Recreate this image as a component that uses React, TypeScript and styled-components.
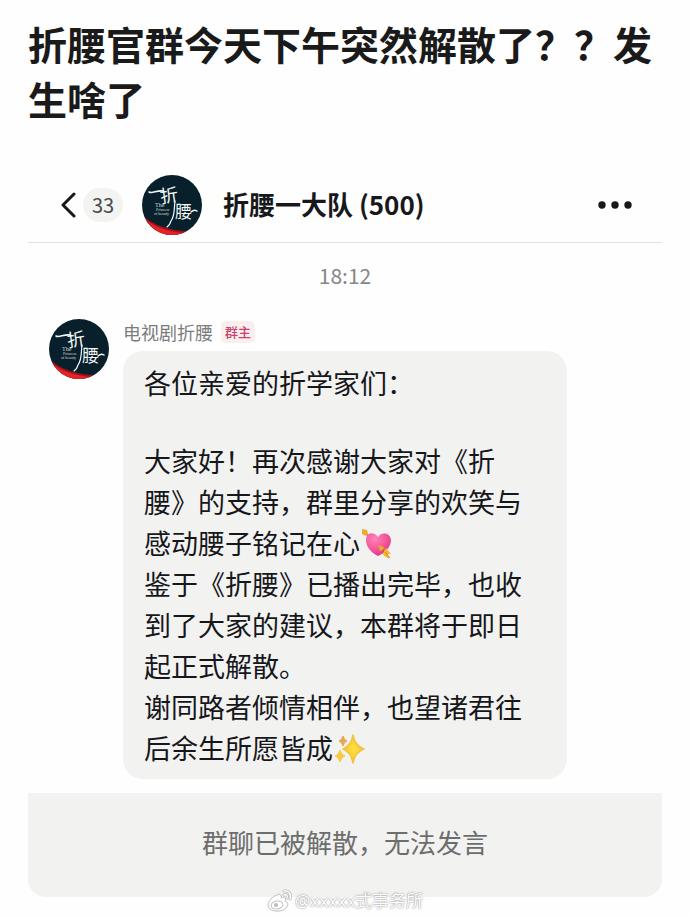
import React from "react";
import styled, { createGlobalStyle } from "styled-components";

const GlobalStyle = createGlobalStyle`
  *, *::before, *::after { box-sizing: border-box; }
  body {
    margin: 0;
    background: #fefefe;
    color: #16171a;
    font-family: "Noto Sans CJK SC", "Noto Sans", sans-serif;
    text-spacing-trim: space-all;
  }
`;

const Page = styled.main`
  position: relative;
  padding: 16px 28px 20px;
`;

const PostTitle = styled.h1`
  margin: 0;
  font-size: 39px;
  line-height: 55px;
  font-weight: 700;
  color: #1a1a1a;
`;

const ChatHeader = styled.header`
  display: flex;
  align-items: center;
  height: 76px;
  margin-top: 41px;
  padding: 0 28px 0 32px;
  border-bottom: 1px solid #e2e2e2;
`;

const IconButton = styled.button`
  display: flex;
  padding: 0;
  border: 0;
  background: none;
  color: #17181c;
  cursor: pointer;
`;

const UnreadBadge = styled.span`
  margin: 0 19px 0 7px;
  width: 40px;
  border-radius: 17px;
  background: #f3f3f2;
  color: #4c4c4e;
  font-size: 20px;
  line-height: 34px;
  text-align: center;
`;

const AvatarArt = styled.svg`
  flex: none;
  width: 60px;
  height: 60px;
`;

const GroupName = styled.h2`
  flex: 1;
  margin: 0 0 0 21px;
  padding-bottom: 2px;
  font-size: 26px;
  line-height: 36px;
  font-weight: 700;
  color: #17181c;
`;

const Timestamp = styled.time`
  display: block;
  margin-top: 17px;
  color: #868686;
  font-size: 21px;
  line-height: 30px;
  text-align: center;
`;

const Message = styled.article`
  display: flex;
  align-items: flex-start;
  gap: 14px;
  margin-top: 29px;
  padding: 0 95px 0 21px;
`;

const MessageBody = styled.div`
  flex: 1;
  min-width: 0;
`;

const Sender = styled.div`
  display: flex;
  align-items: center;
  gap: 8px;
  height: 26px;
  color: #7b7b7d;
  font-size: 18px;
  line-height: 26px;
`;

const OwnerTag = styled.span`
  padding: 0 4px;
  border-radius: 5px;
  background: #fbeeee;
  color: #c9426c;
  font-size: 13px;
  font-weight: 500;
  line-height: 22px;
`;

const Bubble = styled.div`
  margin-top: 6px;
  padding: 11px 21px;
  border-radius: 20px;
  background: #f2f2f1;
  font-size: 27px;
  line-height: 41px;
`;

const Paragraph = styled.p`
  margin: 0;
`;

const Greeting = styled(Paragraph)`
  padding-bottom: 37px;
`;

const Emoji = styled.svg`
  width: 32px;
  height: 32px;
  vertical-align: -6px;
`;

const Notice = styled.footer`
  margin-top: 14px;
  padding: 29px 16px 35px;
  border-radius: 0 0 18px 18px;
  background: #f2f2f1;
  color: #6d6d6d;
  font-size: 26px;
  line-height: 40px;
  text-align: center;
`;

const Watermark = styled.div`
  position: absolute;
  left: 0;
  right: 0;
  bottom: 4px;
  display: flex;
  justify-content: center;
  align-items: center;
  gap: 2px;
  color: #fff;
  font-family: "Noto Sans", "Noto Sans CJK SC", sans-serif;
  font-size: 17px;
  line-height: 24px;
  text-shadow: 0 0 2px #8a8a8a, 0 0 1px #9a9a9a;
  opacity: 0.85;
`;

function Avatar({ id }: { id: string }) {
  return (
    <AvatarArt viewBox="0 0 60 60" role="img" aria-label="折腰">
      <clipPath id={id}>
        <circle cx="30" cy="30" r="30" />
      </clipPath>
      <g clipPath={`url(#${id})`}>
        <rect width="60" height="60" fill="#07202b" />
        <path d="M0 40C11 50 27 56 47 56L42 62H0Z" fill="#a80f19" />
        <path d="M1 43C12 52 26 57 43 58L39 61H5Z" fill="#e22328" />
        <path d="M46 3C50 5 54 10 57 15L59 8L51 1Z" fill="#b51620" />
        <g fill="#f4f7f7" fontFamily="Noto Sans CJK SC, sans-serif" fontWeight="400">
          <text x="18" y="27" fontSize="18" transform="rotate(-8 27 20)">折</text>
          <text x="33" y="43" fontSize="17">腰</text>
        </g>
        <g fill="none" stroke="#f4f7f7" strokeLinecap="round">
          <path d="M7 17C10 19 15 15 21 16" strokeWidth="1.6" />
          <path d="M33 26C32 33 33 41 29 46Q28 50 25 52" strokeWidth="1.2" />
          <path d="M49 37Q52 34 55 36" strokeWidth="1.5" />
        </g>
        <g fill="#d5dddf" fontFamily="Liberation Serif, serif">
          <text x="13" y="32" fontSize="6">The</text>
          <text x="14" y="36" fontSize="4">Princess</text>
          <text x="12" y="40" fontSize="4">of beauty</text>
        </g>
      </g>
    </AvatarArt>
  );
}

function HeartArrow() {
  return (
    <Emoji viewBox="0 0 32 32" role="img" aria-label="💘">
      <defs>
        <radialGradient id="heart" cx="0.35" cy="0.25" r="0.8">
          <stop offset="0" stopColor="#ff83b5" />
          <stop offset="0.6" stopColor="#f2559a" />
          <stop offset="1" stopColor="#dc3782" />
        </radialGradient>
      </defs>
      <path d="M4 4L11 10" stroke="#c98a32" strokeWidth="2" />
      <path d="M2 1L7 2L8 6L6 8L2 6Z" fill="#eeaa35" />
      <path d="M18 28C10 24 6 18 6 12C6 4 14 3 18 9C22 3 31 5 31 13C30 20 25 25 18 28Z" fill="url(#heart)" />
      <path d="M19 18L27 26" stroke="#a96423" strokeWidth="2.4" />
      <path d="M18 17L24 19L23 22L20 23Z" fill="#eca72f" />
      <path d="M24 23L26 20L31 26L28 26L29 31L23 27Z" fill="#f5b52f" />
      <path d="M25 24L30 30" stroke="#d48b22" strokeWidth="1" />
    </Emoji>
  );
}

function Sparkles() {
  return (
    <Emoji viewBox="0 0 32 32" role="img" aria-label="✨">
      <defs>
        <radialGradient id="spark">
          <stop offset="0" stopColor="#ffe23f" />
          <stop offset="1" stopColor="#f2c137" />
        </radialGradient>
      </defs>
      <path d="M20 2Q22 13 31 16Q22 19 20 30Q18 19 10 16Q18 13 20 2Z" fill="url(#spark)" stroke="#f2c540" strokeWidth="1.5" strokeLinejoin="round" />
      <path d="M7 17Q8 22 12 23Q8 24 7 29Q6 24 2 23Q6 22 7 17Z" fill="#f6cb42" stroke="#f6cb42" strokeWidth="1" strokeLinejoin="round" />
      <path d="M10 3Q11 7 14 8Q11 9 10 13Q9 9 6 8Q9 7 10 3Z" fill="#e8a552" stroke="#e8a552" strokeWidth="1" strokeLinejoin="round" />
    </Emoji>
  );
}

function WeiboMark() {
  return (
    <svg width="26" height="24" viewBox="0 0 26 24" aria-hidden="true">
      <g stroke="#b5b5b5" strokeWidth="1" fill="#fff">
        <path d="M10 6C13 4 15 6 14 9C18 7 20 9 18 12C21 13 22 16 19 19C14 24 1 23 1 16C1 12 6 7 10 6Z" />
        <ellipse cx="10" cy="16" rx="6" ry="4" transform="rotate(-8 10 16)" />
      </g>
      <circle cx="9" cy="16" r="2" fill="#b0b0b0" />
      <g fill="none" strokeLinecap="round">
        <path d="M17 2C22 1 25 6 23 10M17 6C20 5 21 7 20 9" stroke="#b5b5b5" strokeWidth="3" />
        <path d="M17 2C22 1 25 6 23 10M17 6C20 5 21 7 20 9" stroke="#fff" strokeWidth="1.5" />
      </g>
    </svg>
  );
}

export default function App() {
  return (
    <>
      <GlobalStyle />
      <Page>
        <PostTitle>折腰官群今天下午突然解散了？？发生啥了</PostTitle>
        <ChatHeader>
          <IconButton type="button" aria-label="返回">
            <svg width="16" height="28" viewBox="0 0 16 28" fill="none" stroke="currentColor" strokeWidth="3" strokeLinecap="round" strokeLinejoin="round">
              <path d="M14 3L3 14L14 25" />
            </svg>
          </IconButton>
          <UnreadBadge>33</UnreadBadge>
          <Avatar id="header-avatar" />
          <GroupName>折腰一大队 (500)</GroupName>
          <IconButton type="button" aria-label="更多">
            <svg width="38" height="28" viewBox="0 0 38 28" fill="currentColor">
              <circle cx="6" cy="14" r="3.7" />
              <circle cx="19" cy="14" r="3.7" />
              <circle cx="32" cy="14" r="3.7" />
            </svg>
          </IconButton>
        </ChatHeader>
        <Timestamp>18:12</Timestamp>
        <Message>
          <Avatar id="sender-avatar" />
          <MessageBody>
            <Sender>
              电视剧折腰<OwnerTag>群主</OwnerTag>
            </Sender>
            <Bubble>
              <Greeting>各位亲爱的折学家们：</Greeting>
              <Paragraph>
                大家好！再次感谢大家对《折腰》的支持，群里分享的欢笑与感动腰子铭记在心<HeartArrow />
              </Paragraph>
              <Paragraph>鉴于《折腰》已播出完毕，也收到了大家的建议，本群将于即日起正式解散。</Paragraph>
              <Paragraph>
                谢同路者倾情相伴，也望诸君往后余生所愿皆成<Sparkles />
              </Paragraph>
            </Bubble>
          </MessageBody>
        </Message>
        <Notice>群聊已被解散，无法发言</Notice>
        <Watermark>
          <WeiboMark />
          <span>@xxxxx式事务所</span>
        </Watermark>
      </Page>
    </>
  );
}
